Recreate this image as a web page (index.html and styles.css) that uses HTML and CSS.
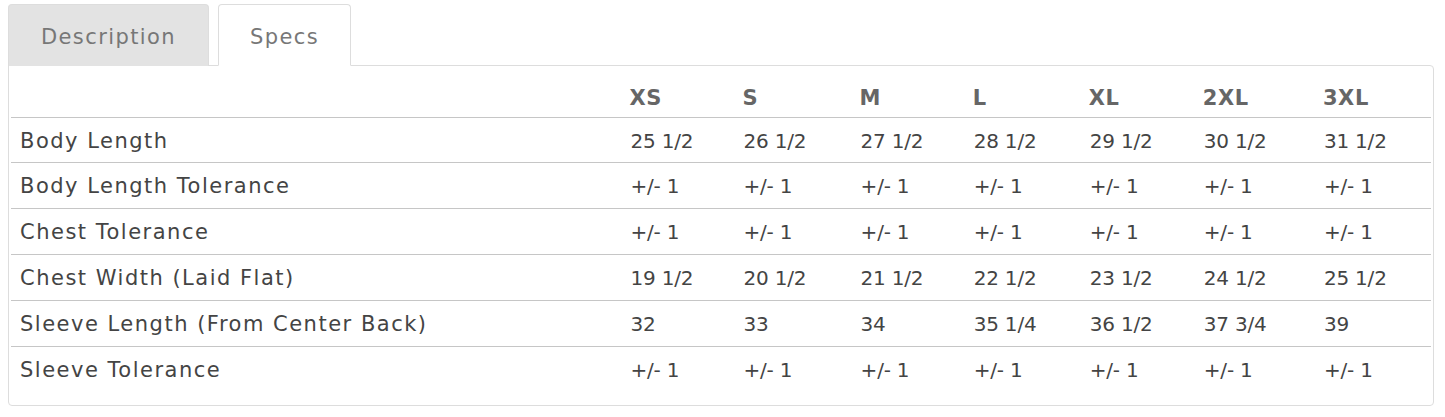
FILE: index.html
```html
<!DOCTYPE html>
<html>
<head>
<meta charset="utf-8">
<link rel="stylesheet" href="styles.css">
</head>
<body>
<div class="wrap">
  <div class="tabs">
    <div class="tab tab-inactive">Description</div>
    <div class="tab tab-active">Specs</div>
  </div>
  <div class="panel">
    <table class="specs">
      <colgroup>
        <col class="c-label"><col class="c-xs"><col class="c-s"><col class="c-m"><col class="c-l"><col class="c-xl"><col class="c-2xl"><col class="c-3xl">
      </colgroup>
      <thead>
        <tr><th></th><th>XS</th><th>S</th><th>M</th><th>L</th><th>XL</th><th>2XL</th><th>3XL</th></tr>
      </thead>
      <tbody>
        <tr><td>Body Length</td><td>25 1/2</td><td>26 1/2</td><td>27 1/2</td><td>28 1/2</td><td>29 1/2</td><td>30 1/2</td><td>31 1/2</td></tr>
        <tr><td>Body Length Tolerance</td><td>+/- 1</td><td>+/- 1</td><td>+/- 1</td><td>+/- 1</td><td>+/- 1</td><td>+/- 1</td><td>+/- 1</td></tr>
        <tr><td>Chest Tolerance</td><td>+/- 1</td><td>+/- 1</td><td>+/- 1</td><td>+/- 1</td><td>+/- 1</td><td>+/- 1</td><td>+/- 1</td></tr>
        <tr><td>Chest Width (Laid Flat)</td><td>19 1/2</td><td>20 1/2</td><td>21 1/2</td><td>22 1/2</td><td>23 1/2</td><td>24 1/2</td><td>25 1/2</td></tr>
        <tr><td>Sleeve Length (From Center Back)</td><td>32</td><td>33</td><td>34</td><td>35 1/4</td><td>36 1/2</td><td>37 3/4</td><td>39</td></tr>
        <tr><td>Sleeve Tolerance</td><td>+/- 1</td><td>+/- 1</td><td>+/- 1</td><td>+/- 1</td><td>+/- 1</td><td>+/- 1</td><td>+/- 1</td></tr>
      </tbody>
    </table>
  </div>
</div>
</body>
</html>
```

FILE: styles.css
```css
html, body {
  margin: 0;
  padding: 0;
  background: #ffffff;
}

body {
  font-family: "DejaVu Sans", "Open Sans", sans-serif;
  color: #444444;
}

.wrap {
  padding: 4px 0 0 8px;
  width: 1426px;
}

.tabs {
  display: flex;
  gap: 9px;
  align-items: flex-end;
  position: relative;
  z-index: 1;
  margin-bottom: -1px;
}

.tab {
  font-size: 21px;
  letter-spacing: 1.4px;
  line-height: 29px;
  color: #777777;
  padding: 18px 0 14px 0;
  border-radius: 4px 4px 0 0;
  height: 62px;
  box-sizing: border-box;
  text-align: center;
}

.tab-inactive {
  background: #e3e3e3;
  border: 1px solid #dddddd;
  border-bottom: none;
  width: 201px;
}

.tab-active {
  background: #ffffff;
  border: 1px solid #dddddd;
  border-bottom: 1px solid #ffffff;
  width: 133px;
}

.panel {
  border: 1px solid #dddddd;
  border-radius: 0 4px 4px 4px;
  padding: 3px 2px 13px 2px;
}

.specs {
  width: 100%;
  border-collapse: collapse;
  table-layout: fixed;
  font-size: 20px;
  line-height: 29px;
}

.c-label { width: 611px; }
.c-xs { width: 113px; }
.c-s { width: 117px; }
.c-m { width: 113px; }
.c-l { width: 116px; }
.c-xl { width: 114px; }
.c-2xl { width: 120px; }
.c-3xl { width: 115px; }

.specs th {
  text-align: left;
  font-weight: bold;
  font-size: 21px;
  letter-spacing: 0.6px;
  color: #666666;
  padding: 15px 7px 4px 7px;
  vertical-align: bottom;
  border-bottom: 1px solid #c6c6c6;
}

.specs td {
  text-align: left;
  padding: 9px 8px 7px 8px;
  border-top: 1px solid #c6c6c6;
  white-space: nowrap;
  letter-spacing: -0.2px;
}

.specs td:first-child {
  padding-left: 9px;
  font-size: 21px;
  letter-spacing: 1.5px;
}

.specs tbody tr:first-child td {
  border-top: none;
  padding-bottom: 6px;
}
```
